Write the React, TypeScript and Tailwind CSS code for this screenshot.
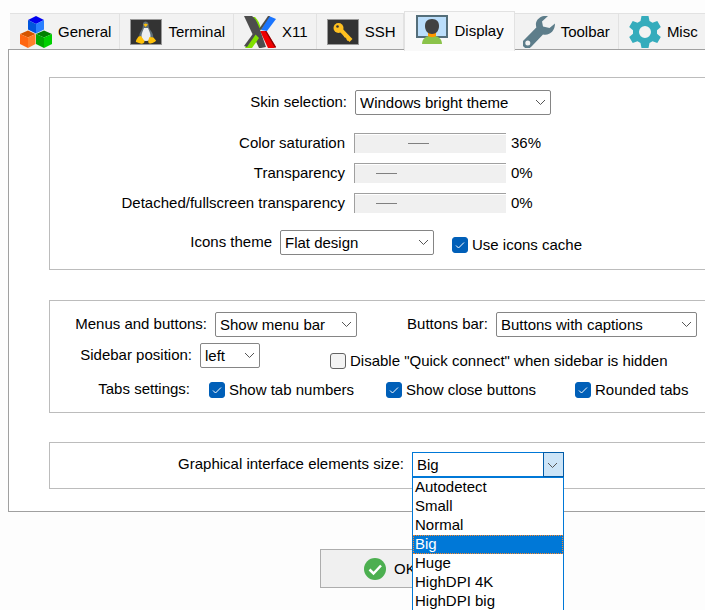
import React, { useState } from 'react';

const GeneralIcon = () => (
  <svg width="32" height="32" viewBox="0 0 32 32">
    <path d="M16 0l8 4-8 4-8-4z" fill="#0000f0" />
    <path d="M8 4l8 4v9.500l-8-4z" fill="#0055dd" />
    <path d="M24 4l-8 4v9.500l8-4z" fill="#2a7fff" />
    <path d="M8 14.500l7.500 3.500L8 21.500 0 18z" fill="#d45500" />
    <path d="M0 18l8 3.500V32l-8-4z" fill="#ff6610" />
    <path d="M15.500 18L8 21.500V32l7.500-4z" fill="#ff7f2a" />
    <path d="M24 14.500l8 3.500-8 3.500-8-3.500z" fill="#008000" />
    <path d="M16 18l8 3.500V32l-8-4z" fill="#00a800" />
    <path d="M32 18l-8 3.500V32l8-4z" fill="#00d000" />
  </svg>
);

const TerminalIcon = () => (
  <svg width="32" height="32" viewBox="0 0 32 32">
    <rect x="0.500" y="3.500" width="31" height="25" fill="#333" stroke="#999" />
    <path d="M13 8c0-3.500 5-3.500 5.500 0 0 3 .5 4.500 2.500 7 2.500 3 3 7 1 10H10C8.500 21 9 18 11 15c1.500-2.500 2-4 2-7z" fill="#607078" />
    <path d="M14 12h4c1 3 2.500 5 2.500 8 0 3-1.500 5-4.500 5s-4.500-2-4.500-5c0-3 1.500-5 2.500-8z" fill="#eceff1" />
    <path d="M13.500 8.500l2-1 2.500 1-2.500 2.500z" fill="#ffc107" />
    <path d="M8.500 20.500l2.500-.5 3.500 5c0 2.500-2 3-4 2.500L6 26c-.5-1 .5-2 .5-2.500zM19.500 21l4 .5 2.500 3c0 1.500-4.500 3-6 3-2 0-2-2-1.500-4z" fill="#ffc107" />
  </svg>
);

const X11Icon = () => (
  <svg width="32" height="32" viewBox="0 0 32 32">
    <path d="M7 1h4c3 3 5 7 6 12l-3 5z" fill="#80e000" />
    <path d="M25 0l7 3-9 12-6-1z" fill="#1a75ff" />
    <path d="M24 0h2l-9 14-2-1z" fill="#4d4d4d" />
    <path d="M16 15h6l10 16-2 1h-6z" fill="#f00000" />
    <path d="M21 15h1.500L32 31l-1 1z" fill="#900000" />
    <path d="M0 0h8c3 2 5 6 7 11l7 20-5 1h-2z" fill="#4d4d4d" />
    <path d="M10 17l5 5-7 10H1z" fill="#80e000" />
    <path d="M11 15l1 3L3 31l-3-1z" fill="#4d4d4d" />
  </svg>
);

const SshIcon = () => (
  <svg width="32" height="32" viewBox="0 0 32 32">
    <rect x="0.500" y="3.500" width="31" height="25" fill="#333" stroke="#999" />
    <path d="M12 12l12 12.500" stroke="#ffc020" strokeWidth="4" />
    <path d="M17 20.500l3-2M20 24l3-2" stroke="#ffc020" strokeWidth="2.500" />
    <circle cx="11.500" cy="12" r="5" fill="#ffc020" />
    <circle cx="10.500" cy="10.500" r="1.300" fill="#333" />
  </svg>
);

const DisplayIcon = () => (
  <svg width="32" height="32" viewBox="0 0 32 32">
    <rect x="1" y="1" width="30" height="21" fill="#bbdefb" stroke="#546e7a" strokeWidth="2" />
    <path d="M6 29c0-5 4-8.500 10-8.500S26 24 26 29z" fill="#8bc34a" />
    <path d="M12 17h8v4c-2 1.500-6 1.500-8 0z" fill="#ff9800" />
    <path d="M16 4c5 0 7 3 7 7 0 5-3 8-7 8s-7-3-7-8c0-4 2-7 7-7z" fill="#424242" />
  </svg>
);

const ToolbarIcon = () => (
  <svg width="32" height="32" viewBox="0 0 32 32">
    <path
      fillRule="evenodd"
      d="M25 0c-5-1-11 2-12 7-.3 1.500 0 3 .3 4.500L1.500 23.500a5 5 0 1 0 7 7L20 18.500c7 1.500 12-4 12-11L26.500 12 20 10.500 19 5.500zM4.800 24.500a2.500 2.500 0 1 1 0 5 2.500 2.500 0 0 1 0-5z"
      fill="#5d7d8a"
    />
  </svg>
);

const MiscIcon = () => (
  <svg width="32" height="32" viewBox="0 0 32 32">
    <path
      fillRule="evenodd"
      d="M12.500 0h7l1 5 3 1.700 4.800-1.700 3.500 6-3.800 3.300v3.400l3.800 3.300-3.500 6-4.800-1.700-3 1.700-1 5h-7l-1-5-3-1.700L3.700 27l-3.500-6L4 17.700v-3.400L.2 11l3.500-6 4.800 1.700 3-1.700zM16 10a6 6 0 1 0 0 12 6 6 0 0 0 0-12z"
      fill="#35acbc"
    />
  </svg>
);

const TABS = [
  { name: 'General', icon: <GeneralIcon /> },
  { name: 'Terminal', icon: <TerminalIcon /> },
  { name: 'X11', icon: <X11Icon /> },
  { name: 'SSH', icon: <SshIcon /> },
  { name: 'Display', icon: <DisplayIcon /> },
  { name: 'Toolbar', icon: <ToolbarIcon /> },
  { name: 'Misc', icon: <MiscIcon /> },
];

const SIZES = ['Autodetect', 'Small', 'Normal', 'Big', 'Huge', 'HighDPI 4K', 'HighDPI big'];

const Chevron = () => (
  <svg width="11" height="7" viewBox="0 0 11 7" fill="none" className="pointer-events-none absolute right-[5px] top-[9px]">
    <path d="M1 1l4.500 4.500L10 1" stroke="#555" />
  </svg>
);

interface SelectFieldProps {
  label: string;
  value: string;
  labelClass?: string;
  boxClass: string;
}

const SelectField: React.FC<SelectFieldProps> = ({ label, value, labelClass = '', boxClass }) => (
  <label className="flex items-center gap-2">
    <span className={`pb-[2px] text-right ${labelClass}`}>{label}</span>
    <span className={`relative ${boxClass}`}>
      <select className="block h-[25px] w-full appearance-none rounded-[2px] border border-[#858585] bg-white pl-1 pr-5 leading-[23px] outline-none">
        <option>{value}</option>
      </select>
      <Chevron />
    </span>
  </label>
);

const SliderField: React.FC<{ label: string; initial: number }> = ({ label, initial }) => {
  const [value, setValue] = useState(initial);

  return (
    <label className="flex h-5 items-center">
      <span className="w-[295px] text-right">{label}</span>
      <input
        type="range"
        min={0}
        max={100}
        value={value}
        onChange={(e) => setValue(Number(e.target.value))}
        className="ml-[9px] h-5 w-[152px] appearance-none border-l border-t border-[#a0a0a0] bg-[#f0f0f0] pl-[21px] pr-5 shadow-[inset_0_1px_#fff] outline-none [&::-webkit-slider-thumb]:h-px [&::-webkit-slider-thumb]:w-[21px] [&::-webkit-slider-thumb]:appearance-none [&::-webkit-slider-thumb]:bg-[#808080]"
      />
      <span className="ml-[5px]">{value}%</span>
    </label>
  );
};

const CheckField: React.FC<{ label: string; initial?: boolean; className?: string }> = ({ label, initial = false, className = '' }) => {
  const [checked, setChecked] = useState(initial);

  return (
    <label className={`flex items-center gap-1 ${className}`}>
      <span className="relative size-4 shrink-0">
        <input
          type="checkbox"
          checked={checked}
          onChange={() => setChecked(!checked)}
          className="block size-4 appearance-none rounded-[3px] border border-[#626262] bg-[#f3f3f3] checked:border-[#005fb8] checked:bg-[#005fb8]"
        />
        {checked && (
          <svg width="16" height="16" viewBox="0 0 16 16" fill="none" className="pointer-events-none absolute inset-0">
            <path d="M4 8.500l2.500 2.500L12 5.500" stroke="#fff" />
          </svg>
        )}
      </span>
      <span className="whitespace-nowrap">{label}</span>
    </label>
  );
};

const SizeField = () => {
  const [size, setSize] = useState('Big');
  const [open, setOpen] = useState(true);

  return (
    <div className="flex items-center gap-2">
      <label htmlFor="size" className="w-[354px] pb-[2px] text-right">Graphical interface elements size:</label>
      <div className="relative w-[152px]">
        <select
          id="size"
          value={size}
          onChange={(e) => setSize(e.target.value)}
          onMouseDown={(e) => {
            e.preventDefault();
            setOpen(!open);
          }}
          className="block h-[25px] w-full appearance-none border border-[#0078d7] bg-white pl-1 leading-[23px] outline-none"
        >
          {SIZES.map((s) => <option key={s}>{s}</option>)}
        </select>
        <span className="pointer-events-none absolute right-0 top-0 h-[25px] w-[21px] border border-[#005ba8] bg-[#cce4f7]">
          <Chevron />
        </span>
        {open && (
          <ul role="listbox" className="absolute left-0 top-full z-10 w-full border border-[#0078d7] bg-white">
            {SIZES.map((s) => (
              <li
                key={s}
                role="option"
                aria-selected={s === size}
                onClick={() => {
                  setSize(s);
                  setOpen(false);
                }}
                className={`h-[19px] border px-px leading-4 ${s === size ? 'border-dotted border-[#ff8728] bg-[#0078d7] text-white' : 'border-transparent'}`}
              >
                {s}
              </li>
            ))}
          </ul>
        )}
      </div>
    </div>
  );
};

export default function App() {
  const [active, setActive] = useState('Display');

  return (
    <main className="h-screen overflow-hidden bg-[#fdfdfd] pl-2 pt-[11px] font-['Liberation_Sans',Arial,sans-serif] text-[15px] leading-5 text-black">
      <div role="tablist" className="flex h-[38px] items-end pl-[2px]">
        {TABS.map((tab) => (
          <button
            key={tab.name}
            role="tab"
            aria-selected={tab.name === active}
            onClick={() => setActive(tab.name)}
            className={`flex shrink-0 gap-[6px] border-r border-t border-[#e2e2e2] ${
              tab.name === active
                ? 'relative z-10 -mb-[2px] -mr-[2px] h-10 border-l bg-[#f9f9f9] pl-[11px] pr-[10px] pt-[3px]'
                : 'h-9 bg-[#f2f2f2] pl-[10px] pr-2 pt-[2px]'
            }`}
          >
            {tab.icon}
            <span className="leading-8">{tab.name}</span>
          </button>
        ))}
      </div>

      <div role="tabpanel" className="flex flex-col border-y border-l border-[#a0a0a0] bg-white pb-[22px] pl-10 pt-[27px]">
        <section className="border-y border-l border-[#bcbcbc] pb-[14px] pt-3">
          <SelectField label="Skin selection:" value="Windows bright theme" labelClass="w-[297px]" boxClass="w-[196px]" />
          <div className="mt-[18px] flex flex-col gap-[10px]">
            <SliderField label="Color saturation" initial={36} />
            <SliderField label="Transparency" initial={0} />
            <SliderField label="Detached/fullscreen transparency" initial={0} />
          </div>
          <div className="mt-[17px] flex items-center gap-[18px]">
            <SelectField label="Icons theme" value="Flat design" labelClass="w-[222px]" boxClass="w-[154px]" />
            <CheckField label="Use icons cache" initial className="pt-1" />
          </div>
        </section>

        <section className="mt-[30px] border-y border-l border-[#bcbcbc] py-[11px]">
          <div className="flex items-center">
            <SelectField label="Menus and buttons:" value="Show menu bar" labelClass="w-[157px]" boxClass="w-[142px]" />
            <SelectField label="Buttons bar:" value="Buttons with captions" labelClass="w-[131px]" boxClass="w-[201px]" />
          </div>
          <div className="mt-[6px] flex items-end">
            <SelectField label="Sidebar position:" value="left" labelClass="w-[142px]" boxClass="w-[60px]" />
            <CheckField label={'Disable "Quick connect" when sidebar is hidden'} className="-mb-[3px] ml-[70px]" />
          </div>
          <div className="mt-[11px] flex items-center">
            <span className="w-[140px] pb-[2px] text-right">Tabs settings:</span>
            <CheckField label="Show tab numbers" initial className="ml-[19px] w-[177px]" />
            <CheckField label="Show close buttons" initial className="w-[189px]" />
            <CheckField label="Rounded tabs" initial />
          </div>
        </section>

        <section className="mt-[29px] border-y border-l border-[#bcbcbc] pb-[11px] pt-[9px]">
          <SizeField />
        </section>
      </div>

      <button className="ml-[312px] mt-[37px] flex h-[39px] items-center gap-2 border border-[#adadad] bg-[#f0f0f0] px-[43px]">
        <svg width="22" height="22" viewBox="0 0 22 22" fill="none">
          <circle cx="11" cy="11" r="11" fill="#4caf50" />
          <path d="M5.500 11.500l4 4 7.500-8" stroke="#fff" strokeWidth="2.500" />
        </svg>
        OK
      </button>
    </main>
  );
}
